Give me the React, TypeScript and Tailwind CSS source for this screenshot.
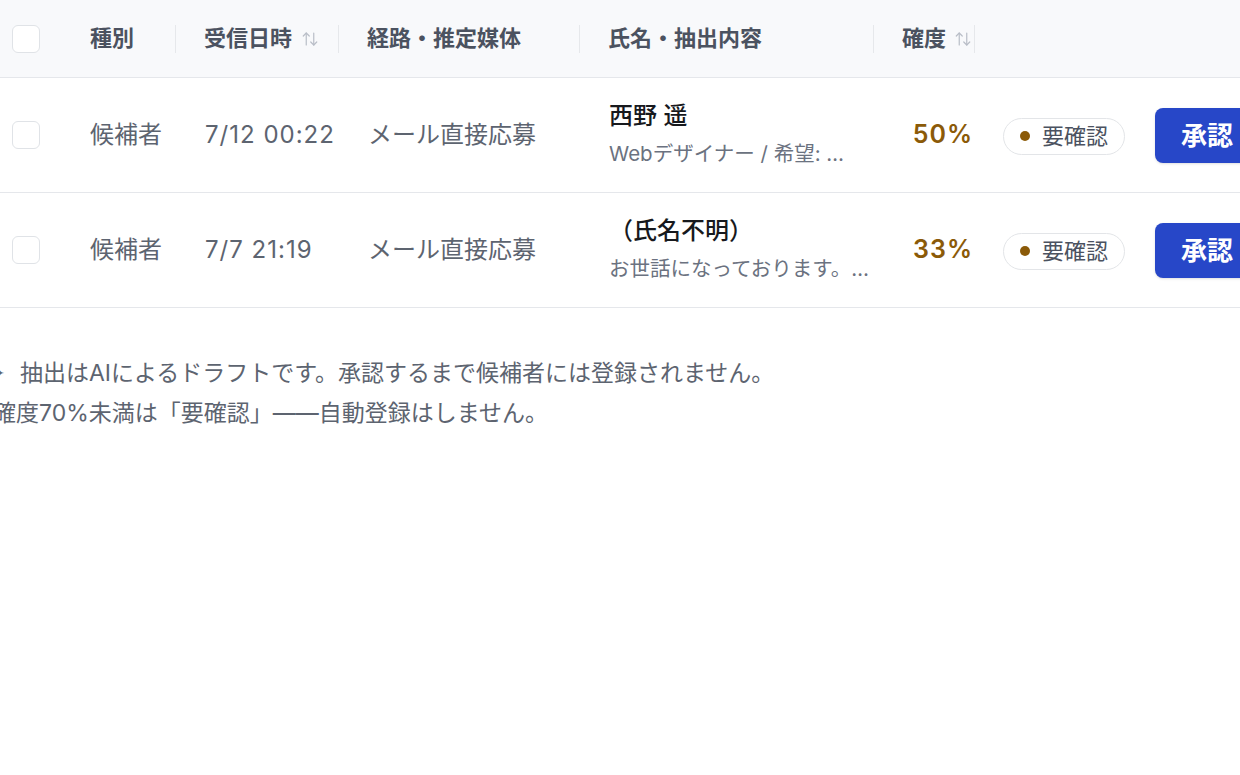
import React from 'react';

type Row = {
  kind: string;
  received: string;
  route: string;
  name: string;
  excerpt: string;
  score: string;
};

const rows: Row[] = [
  { kind: '候補者', received: '7/12 00:22', route: 'メール直接応募', name: '西野 遥', excerpt: 'Webデザイナー / 希望: …', score: '50%' },
  { kind: '候補者', received: '7/7 21:19', route: 'メール直接応募', name: '（氏名不明）', excerpt: 'お世話になっております。…', score: '33%' },
];

const cols = 'grid grid-cols-[62px_114px_163px_241px_294px_101px_152px_120px] w-[1247px]';

function SortIcon() {
  return (
    <svg width="18" height="18" viewBox="0 0 24 24" fill="none" stroke="#b9bec7" strokeWidth="1.6" strokeLinecap="round" strokeLinejoin="round">
      <path d="m3 8 4-4 4 4" />
      <path d="M7 4v16" />
      <path d="m21 16-4 4-4-4" />
      <path d="M17 20V4" />
    </svg>
  );
}

function Checkbox() {
  return <div className="w-7 h-7 rounded-md border-[1.5px] border-[#e0e3e7] bg-white" />;
}

function HeadCell({ label, sortable }: { label: string; sortable?: boolean }) {
  return (
    <div className="flex items-center justify-between pl-[28px]">
      <div className="flex items-center gap-[9px]">
        <span>{label}</span>
        {sortable && <SortIcon />}
      </div>
      <span className="w-px h-7 bg-[#e6e8eb]" />
    </div>
  );
}

export default function App() {
  return (
    <div className="w-[1240px] h-[775px] overflow-hidden bg-white font-[Inter,'Noto_Sans_CJK_JP',sans-serif]">
      {/* header */}
      <div className="bg-[#f8f9fb] border-b border-[#e5e7eb]">
        <div className={`${cols} h-[77px] items-center text-[22px] font-semibold text-[#4b5260]`}>
          <div className="pl-[12px]">
            <Checkbox />
          </div>
          <HeadCell label="種別" />
          <HeadCell label="受信日時" sortable />
          <HeadCell label="経路・推定媒体" />
          <HeadCell label="氏名・抽出内容" />
          <div className="flex items-center justify-between pl-[28px]">
            <div className="flex items-center gap-[8px]">
              <span>確度</span>
              <SortIcon />
            </div>
            <span className="w-px h-7 bg-[#e6e8eb]" />
          </div>
          <div />
          <div />
        </div>
      </div>

      {/* rows */}
      {rows.map((r, i) => (
        <div key={i} className="border-b border-[#e5e7eb]">
          <div className={`${cols} h-[114px] items-center text-[24px] text-[#5d6470]`}>
            <div className="pl-[12px]">
              <Checkbox />
            </div>
            <div className="pl-[28px]">{r.kind}</div>
            <div className="pl-[29px] text-[24px] tracking-[1px] whitespace-nowrap">{r.received}</div>
            <div className="pl-[29px]">{r.route}</div>
            <div className="pl-[29px] flex flex-col">
              <span className="leading-[34px] text-[#17191d] font-medium">{r.name}</span>
              <span className="mt-[4px] leading-[34px] text-[20.5px] text-[#6b7280] whitespace-nowrap">{r.excerpt}</span>
            </div>
            <div className="pr-[2px] text-right text-[25px] tracking-[1px] font-semibold text-[#8b5a08]">{r.score}</div>
            <div className="pl-[28px]">
              <span className="inline-flex items-center gap-[12px] h-[37px] pl-[16px] pr-[16px] rounded-full border border-[#e3e5e8] text-[22px] text-[#4b5260]">
                <span className="w-[10px] h-[10px] rounded-full bg-[#8b5a08]" />
                要確認
              </span>
            </div>
            <div className="pl-[28px]">
              <button className="h-[55px] w-[104px] rounded-lg bg-[#2747c8] text-white text-[26px] font-bold shadow-sm">
                承認
              </button>
            </div>
          </div>
        </div>
      ))}

      {/* notes */}
      <div className="mt-[45px] -ml-[7px] text-[23px] leading-[40px] text-[#5d6470]">
        <p className="flex items-center">
          <span className="text-[14px] w-[27px]">✦</span>
          <span>抽出はAIによるドラフトです。承認するまで候補者には登録されません。</span>
        </p>
        <p>確度70%未満は「要確認」——自動登録はしません。</p>
      </div>
    </div>
  );
}
